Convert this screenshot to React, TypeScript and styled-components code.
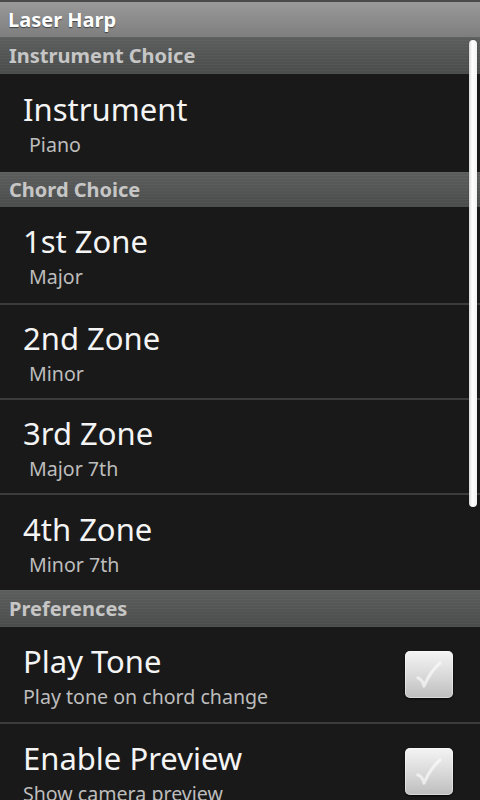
import React from "react";
import styled, { createGlobalStyle } from "styled-components";

const Global = createGlobalStyle`
  html, body { margin: 0; padding: 0; background: #191919; overflow: hidden; }
  body { font-family: "Noto Sans", "Open Sans", sans-serif; }
  #root { width: 480px; height: 800px; }
`;

const Screen = styled.div`
  position: relative;
  width: 480px;
  height: 800px;
  overflow: hidden;
  background: #191919;
  display: flex;
  flex-direction: column;
`;

const TitleBar = styled.div`
  flex: none;
  height: 35px;
  border-top: 2px solid #4a4a4a;
  background: linear-gradient(#999999, #7e7e7e);
  display: flex;
  align-items: center;
  padding-left: 8px;
  color: #ffffff;
  font-weight: 700;
  font-size: 20px;
  text-shadow: 0 1px 1px rgba(0, 0, 0, 0.5);
`;

const SectionHeader = styled.div<{ $h: number }>`
  flex: none;
  height: ${(p) => p.$h}px;
  box-sizing: border-box;
  background: repeating-linear-gradient(
      to bottom,
      rgba(255, 255, 255, 0.03) 0px,
      rgba(255, 255, 255, 0.03) 1px,
      rgba(0, 0, 0, 0) 1px,
      rgba(0, 0, 0, 0) 3px
    ),
    linear-gradient(#5b5e5c, #4a4c4b);
  display: flex;
  align-items: center;
  padding-left: 9px;
  color: #c6c6c6;
  font-weight: 700;
  font-size: 20px;
`;

const Row = styled.div<{ $h: number; $divider?: boolean }>`
  flex: none;
  height: ${(p) => p.$h}px;
  box-sizing: border-box;
  display: flex;
  align-items: center;
  padding: 0 27px 0 23px;
  border-bottom: ${(p) => (p.$divider ? "2px solid #3c3c3c" : "none")};
`;

const TextBlock = styled.div`
  flex: 1;
  display: flex;
  flex-direction: column;
  padding-top: 1px;
`;

const Title = styled.div`
  color: #f4f4f4;
  font-size: 31px;
  line-height: 40px;
`;

const Summary = styled.div<{ $indent?: boolean }>`
  color: #bdbdbd;
  font-size: 19.6px;
  line-height: 26px;
  margin-top: 3px;
  padding-left: ${(p) => (p.$indent ? "6px" : "0")};
`;

const CheckBox = styled.div`
  flex: none;
  width: 48px;
  height: 47px;
  border-radius: 5px;
  background: linear-gradient(#f4f4f4, #d8d8d8 55%, #bdbdbd);
  box-shadow: 0 1px 2px rgba(0, 0, 0, 0.8), inset 0 0 0 1px rgba(255, 255, 255, 0.4);
  display: flex;
  align-items: center;
  justify-content: center;
`;

const ScrollThumb = styled.div`
  position: absolute;
  left: 469px;
  top: 40px;
  width: 8px;
  height: 467px;
  border-radius: 4px;
  background: linear-gradient(to right, #d9d9d9, #ffffff 40%, #f2f2f2);
  box-shadow: 0 0 1px rgba(0, 0, 0, 0.6);
`;

const Check = () => (
  <svg width="30" height="32" viewBox="0 0 30 32">
    <path
      d="M4 19 C7 20 9 23 10 27 C14 18 19 10 26 4"
      fill="none"
      stroke="#ffffff"
      strokeOpacity="0.6"
      strokeWidth="3.2"
      strokeLinecap="round"
      strokeLinejoin="round"
    />
  </svg>
);

type ListItem = { title: string; summary: string; h: number; divider?: boolean };

const zones: ListItem[] = [
  { title: "1st Zone", summary: "Major", h: 98, divider: true },
  { title: "2nd Zone", summary: "Minor", h: 95, divider: true },
  { title: "3rd Zone", summary: "Major 7th", h: 95, divider: true },
  { title: "4th Zone", summary: "Minor 7th", h: 95 },
];

const ListRow = ({ item }: { item: ListItem }) => (
  <Row $h={item.h} $divider={item.divider}>
    <TextBlock>
      <Title>{item.title}</Title>
      <Summary $indent>{item.summary}</Summary>
    </TextBlock>
  </Row>
);

const CheckRow = ({ title, summary, h, divider }: ListItem) => (
  <Row $h={h} $divider={divider}>
    <TextBlock>
      <Title>{title}</Title>
      <Summary>{summary}</Summary>
    </TextBlock>
    <CheckBox>
      <Check />
    </CheckBox>
  </Row>
);

export default function App() {
  return (
    <>
      <Global />
      <Screen>
        <TitleBar>Laser Harp</TitleBar>
        <SectionHeader $h={37}>Instrument Choice</SectionHeader>
        <ListRow item={{ title: "Instrument", summary: "Piano", h: 98 }} />
        <SectionHeader $h={35}>Chord Choice</SectionHeader>
        {zones.map((z) => (
          <ListRow key={z.title} item={z} />
        ))}
        <SectionHeader $h={37}>Preferences</SectionHeader>
        <CheckRow title="Play Tone" summary="Play tone on chord change" h={97} divider />
        <CheckRow title="Enable Preview" summary="Show camera preview" h={95} />
        <ScrollThumb />
      </Screen>
    </>
  );
}
